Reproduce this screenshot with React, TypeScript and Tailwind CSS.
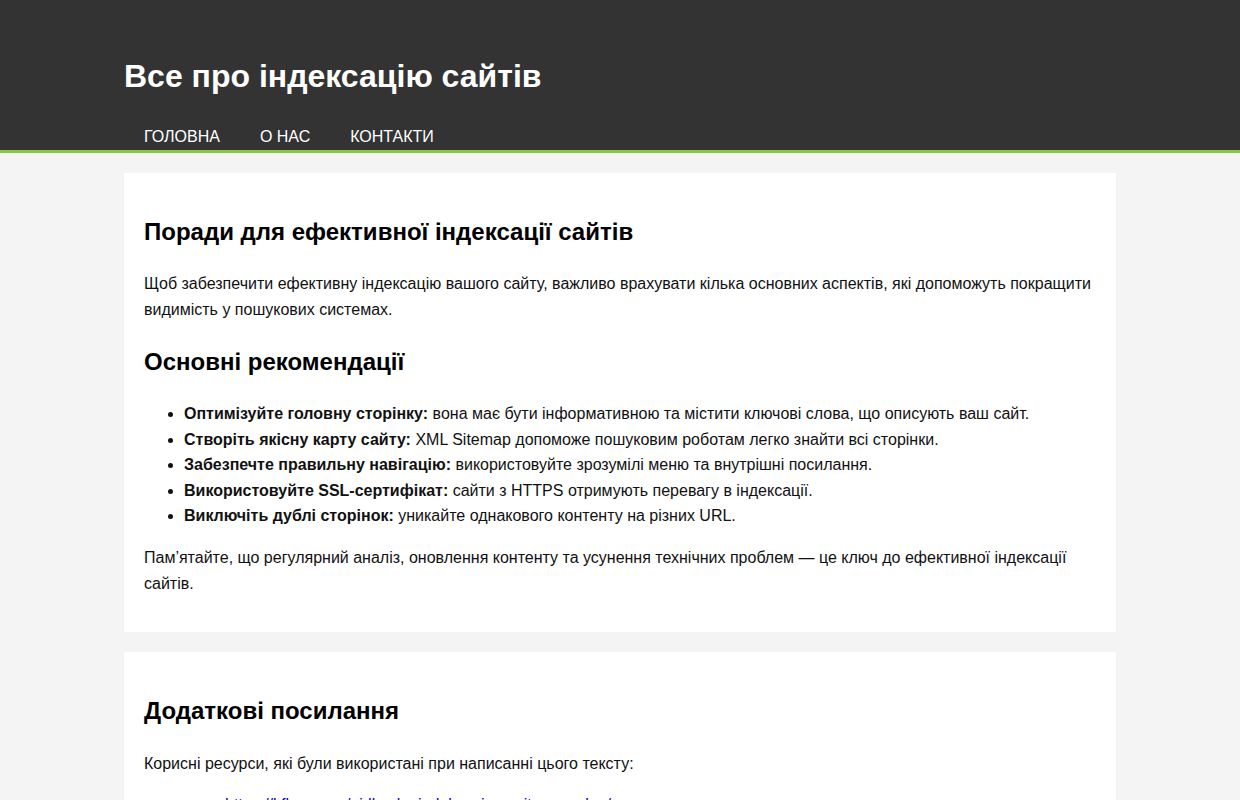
export default function App() {
  const tips = [
    ['Оптимізуйте головну сторінку:', 'вона має бути інформативною та містити ключові слова, що описують ваш сайт.'],
    ['Створіть якісну карту сайту:', 'XML Sitemap допоможе пошуковим роботам легко знайти всі сторінки.'],
    ['Забезпечте правильну навігацію:', 'використовуйте зрозумілі меню та внутрішні посилання.'],
    ['Використовуйте SSL-сертифікат:', 'сайти з HTTPS отримують перевагу в індексації.'],
    ['Виключіть дублі сторінок:', 'уникайте однакового контенту на різних URL.'],
  ]

  return (
    <div className="min-h-screen bg-[#f4f4f4] font-['Liberation_Sans',Arial,sans-serif] text-[16px] leading-[1.6] text-[#111]">
      <header className="bg-[#333333] border-b-[3px] border-[#8cc63f]">
        <div className="mx-auto w-[992px] pt-[51px]">
          <h1 className="text-[32px] font-bold leading-[51px] text-white">Все про індексацію сайтів</h1>
          <nav className="mt-[21px] flex h-[27px]">
            {['Головна', 'О нас', 'Контакти'].map((item) => (
              <a key={item} href="#" className="px-5 uppercase text-white leading-[27px]">
                {item}
              </a>
            ))}
          </nav>
        </div>
      </header>

      <main className="mx-auto w-[992px] pt-5">
        <section className="bg-white p-5">
          <h2 className="my-[20px] text-[24px] font-bold leading-[1.6] text-black">Поради для ефективної індексації сайтів</h2>
          <p className="my-4">
            Щоб забезпечити ефективну індексацію вашого сайту, важливо врахувати кілька основних аспектів, які допоможуть покращити видимість у пошукових системах.
          </p>
          <h2 className="my-[20px] text-[24px] font-bold leading-[1.6] text-black">Основні рекомендації</h2>
          <ul className="my-4 list-disc pl-10">
            {tips.map(([b, t]) => (
              <li key={b}>
                <strong>{b}</strong> {t}
              </li>
            ))}
          </ul>
          <p className="my-4">
            Пам’ятайте, що регулярний аналіз, оновлення контенту та усунення технічних проблем — це ключ до ефективної індексації сайтів.
          </p>
        </section>

        <section className="mt-5 bg-white p-5">
          <h2 className="my-[20px] text-[24px] font-bold leading-[1.6] text-black">Додаткові посилання</h2>
          <p className="my-4">Корисні ресурси, які були використані при написанні цього тексту:</p>
          <ul className="my-4 list-disc pl-10">
            <li>
              <a href="#" className="ml-[41px] text-[#0000cc] underline">
                https://kfl.com.ua/pidkazky-indeksaciya-sajtu-pravylno/
              </a>
            </li>
          </ul>
        </section>
      </main>
    </div>
  )
}
